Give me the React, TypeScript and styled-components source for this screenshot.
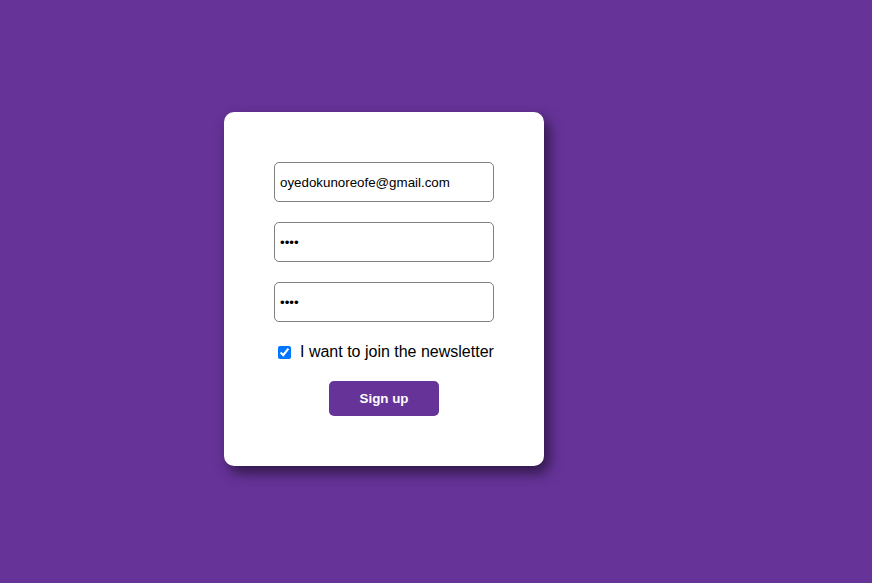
import React from "react";
import styled, { createGlobalStyle } from "styled-components";

const Global = createGlobalStyle`
  html, body { margin: 0; padding: 0; background: #663399; }
  body { font-family: Arial, "Liberation Sans", sans-serif; }
`;

const Page = styled.div`
  min-height: 583px;
  display: flex;
  align-items: flex-start;
  padding: 112px 0 0 224px;
  box-sizing: border-box;
`;

const Card = styled.form`
  background: #fff;
  border-radius: 10px;
  padding: 50px;
  display: flex;
  flex-direction: column;
  gap: 20px;
  box-shadow: 5px 7px 14px rgba(0, 0, 0, 0.55);
`;

const Field = styled.input`
  box-sizing: border-box;
  width: 220px;
  height: 40px;
  border: 1px solid #808080;
  border-radius: 5px;
  padding: 0 5px;
  font-family: "Liberation Sans", Arial, sans-serif;
  font-size: 13.33px;
  color: #000;
  outline: none;
`;

const CheckRow = styled.label`
  display: flex;
  align-items: center;
  font-family: "Liberation Sans", Arial, sans-serif;
  font-size: 16px;
  color: #000;
  margin-top: 1px;
`;

const Check = styled.input`
  width: 13px;
  height: 13px;
  margin: 0 9px 0 4px;
  accent-color: #0075ff;
`;

const Button = styled.button`
  align-self: center;
  width: 110px;
  height: 35px;
  border: none;
  border-radius: 5px;
  background: #663399;
  color: #fff;
  font-family: "Liberation Sans", Arial, sans-serif;
  font-weight: bold;
  font-size: 13.33px;
  cursor: pointer;
`;

export default function App() {
  return (
    <>
      <Global />
      <Page>
        <Card onSubmit={(e) => e.preventDefault()}>
          <Field type="email" defaultValue="oyedokunoreofe@gmail.com" />
          <Field type="password" defaultValue="1234" />
          <Field type="password" defaultValue="1234" />
          <CheckRow>
            <Check type="checkbox" defaultChecked />
            I want to join the newsletter
          </CheckRow>
          <Button type="submit">Sign up</Button>
        </Card>
      </Page>
    </>
  );
}
